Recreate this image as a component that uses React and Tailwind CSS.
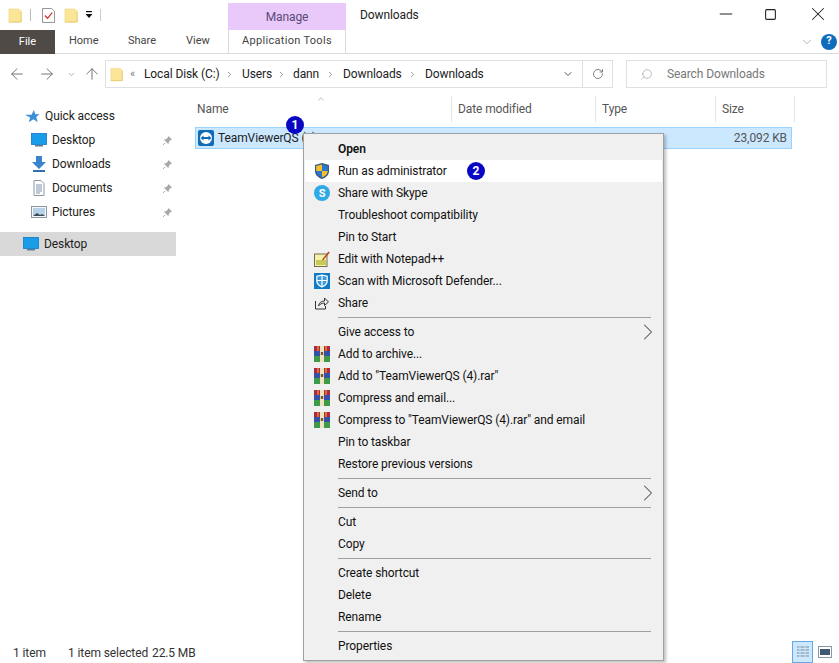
import { ArrowLeft, ArrowRight, ArrowUp, ChevronDown, ChevronRight, ChevronUp, Minus, RotateCw, Search, Square, X } from "lucide-react";

function FolderIcon({ className = "w-[15px] h-[15px]" }) {
  return (
    <svg viewBox="0 0 16 16" className={className}>
      <path d="M1 1h10l3 2v12H1z" fill="#fbe596" stroke="#edd27c" strokeWidth="0.6" />
      <path d="M1 15h13V4" fill="none" stroke="#e6c565" strokeWidth="0.8" />
    </svg>
  );
}

function DesktopIcon() {
  return (
    <svg viewBox="0 0 16 14" className="w-4 h-[14px] shrink-0">
      <rect x="0.5" y="0.5" width="15" height="11" fill="#1a9de8" stroke="#0f78c4" strokeWidth="0.8" />
      <rect x="4" y="12" width="8" height="1.5" fill="#5a7f9c" />
    </svg>
  );
}

function DownloadsIcon() {
  return (
    <svg viewBox="0 0 16 16" className="w-4 h-4 shrink-0">
      <path d="M5 0h6v6h4l-7 7-7-7h4z" fill="#3a84cf" />
      <rect x="2" y="14" width="12" height="2" fill="#2f6fb0" />
    </svg>
  );
}

function DocumentsIcon() {
  return (
    <svg viewBox="0 0 16 16" className="w-4 h-4 shrink-0">
      <path d="M3 .5h7l3 3v12H3z" fill="#fff" stroke="#8b97a3" />
      <path d="M5 5h6M5 7h6M5 9h6M5 11h6M5 13h4" stroke="#6d8ba5" strokeWidth="0.9" />
    </svg>
  );
}

function PicturesIcon() {
  return (
    <svg viewBox="0 0 16 14" className="w-4 h-[14px] shrink-0">
      <rect x="0.5" y="1.5" width="15" height="11" fill="#f5f8fb" stroke="#8b97a3" />
      <rect x="2" y="3" width="12" height="8" fill="#b7d2e8" />
      <path d="M2 11l4-3 3 2 2-1 3 2z" fill="#3d4a52" />
    </svg>
  );
}

function PinIcon() {
  return (
    <svg viewBox="0 0 12 12" className="w-[11px] h-[11px] shrink-0">
      <path d="M7 1l4 4-1.500 .5-2 2-.5 2.500-5-5 2.500-.5 2-2z" fill="#a8a8a8" />
      <path d="M3.500 8.500L1 11" stroke="#a8a8a8" strokeWidth="1" />
    </svg>
  );
}

function StarIcon() {
  return (
    <svg viewBox="0 0 16 16" className="w-[15px] h-[15px] shrink-0">
      <path d="M9.500 1l1.500 4.500h4.500L12 8.500 13.500 14 9 11 4 14l1.500-5L0 6h7z" fill="#3a8fd6" />
    </svg>
  );
}

function TeamViewerIcon() {
  return (
    <svg viewBox="0 0 16 16" className="w-4 h-4 shrink-0">
      <rect width="16" height="16" rx="2" fill="#0e6cb8" />
      <circle cx="8" cy="8" r="6" fill="#fff" />
      <path d="M2.500 8l3-2.500V7h5V5.500l3 2.500-3 2.500V9h-5v1.500z" fill="#0e6cb8" />
    </svg>
  );
}

function ShieldIcon() {
  return (
    <svg viewBox="0 0 16 16" className="w-4 h-4">
      <path d="M8 0L15 2v6c0 4-3 6.500-7 8-4-1.500-7-4-7-8V2z" fill="#3b5a86" />
      <path d="M8 1.500V8H2.200V3z" fill="#f4c02e" />
      <path d="M8 1.500L13.800 3v5H8z" fill="#2b77c8" />
      <path d="M2.200 8H8v6.500C4.800 13.200 2.400 11 2.200 8z" fill="#2b77c8" />
      <path d="M13.800 8H8v6.500c3.200-1.300 5.600-3.500 5.800-6.500z" fill="#f4c02e" />
    </svg>
  );
}

function SkypeIcon() {
  return (
    <div className="w-4 h-4 rounded-full bg-[#2fa9e6] flex items-center justify-center text-white text-[11px] font-bold leading-none">S</div>
  );
}

function NotepadIcon() {
  return (
    <svg viewBox="0 0 16 16" className="w-4 h-4">
      <rect x="0.5" y="3" width="12.500" height="12.500" fill="#f6f1a8" stroke="#6f6f55" />
      <rect x="2" y="9" width="10" height="5" fill="#c9c95a" />
      <path d="M8 8.500l6.500-8 1.200 1.200L9 9.500z" fill="#c0441f" />
    </svg>
  );
}

function DefenderIcon() {
  return (
    <svg viewBox="0 0 16 16" className="w-4 h-4">
      <rect width="16" height="16" fill="#0f7bc4" />
      <path d="M8 2l5.200 1.300V8c0 3-2.400 4.800-5.200 6-2.800-1.200-5.200-3-5.200-6V3.300z" fill="#3d9bdc" stroke="#fff" strokeWidth="1.200" />
      <path d="M8 2v12M3 7.500h10" stroke="#fff" strokeWidth="1.200" />
    </svg>
  );
}

function ShareIcon() {
  return (
    <svg viewBox="0 0 16 16" className="w-4 h-4" fill="none" stroke="#333" strokeWidth="1">
      <path d="M1.500 6v8h10v-3" />
      <path d="M4.500 11c.5-3.500 3-5 6-5V3l4 4-4 3.500V8c-2.500 0-4.500 1-6 3z" />
    </svg>
  );
}

function RarIcon() {
  return (
    <svg viewBox="0 0 16 16" className="w-4 h-4">
      <rect y="0" width="16" height="5" fill="#a82c48" />
      <rect y="5" width="16" height="5" fill="#3550a8" />
      <rect y="10" width="16" height="6" fill="#3f9a48" />
      <rect x="3" y="0" width="2" height="5" fill="#d9702c" />
      <rect x="11" y="0" width="2" height="5" fill="#d9702c" />
      <rect x="6" y="0" width="4" height="16" fill="#efe3c4" />
      <rect x="6.800" y="6" width="2.400" height="3" fill="#7a5a2a" />
    </svg>
  );
}

function Divider() {
  return <div className="h-[7px] flex items-center pl-[33px] pr-[11px]"><div className="h-px w-full bg-[#a0a0a0]" /></div>;
}

function MenuItem({ icon, label, bold, arrow, active }) {
  return (
    <div className={`h-[22px] flex items-center text-[12px] text-[#111] ${active ? "bg-white" : ""}`}>
      <div className="w-[33px] pl-[9px] shrink-0">{icon}</div>
      <span className={`flex-1 whitespace-nowrap ${bold ? "font-semibold" : ""}`}>{label}</span>
      {arrow && <ChevronRight className="w-7 h-7 -my-1 text-[#555]" strokeWidth={0.9} />}
    </div>
  );
}

function ContextMenu() {
  return (
    <div className="absolute left-[303px] top-[133px] w-[361px] h-[528px] bg-[#f0f0f0] border border-[#a0a0a0] pt-1 px-px shadow-[2px_2px_3px_rgba(0,0,0,0.25)]">
      <MenuItem label="Open" bold />
      <MenuItem icon={<ShieldIcon />} label="Run as administrator" active />
      <MenuItem icon={<SkypeIcon />} label="Share with Skype" />
      <MenuItem label="Troubleshoot compatibility" />
      <MenuItem label="Pin to Start" />
      <MenuItem icon={<NotepadIcon />} label="Edit with Notepad++" />
      <MenuItem icon={<DefenderIcon />} label="Scan with Microsoft Defender..." />
      <MenuItem icon={<ShareIcon />} label="Share" />
      <Divider />
      <MenuItem label="Give access to" arrow />
      <MenuItem icon={<RarIcon />} label="Add to archive..." />
      <MenuItem icon={<RarIcon />} label={'Add to "TeamViewerQS (4).rar"'} />
      <MenuItem icon={<RarIcon />} label="Compress and email..." />
      <MenuItem icon={<RarIcon />} label={'Compress to "TeamViewerQS (4).rar" and email'} />
      <MenuItem label="Pin to taskbar" />
      <MenuItem label="Restore previous versions" />
      <Divider />
      <MenuItem label="Send to" arrow />
      <Divider />
      <MenuItem label="Cut" />
      <MenuItem label="Copy" />
      <Divider />
      <MenuItem label="Create shortcut" />
      <MenuItem label="Delete" />
      <MenuItem label="Rename" />
      <Divider />
      <MenuItem label="Properties" />
    </div>
  );
}

function Badge({ n, className }) {
  return (
    <div className={`absolute w-[18px] h-[18px] rounded-full bg-[#0808c4] text-white text-[12px] font-bold flex items-center justify-center ${className}`}>
      {n}
    </div>
  );
}

function TitleBar() {
  return (
    <div className="h-[30px] flex">
      <div className="w-[228px] flex items-center pl-2 shrink-0">
        <FolderIcon />
        <div className="w-px h-[12px] bg-[#bbb] ml-[7px]" />
        <svg viewBox="0 0 14 16" className="w-[13px] h-[15px] ml-[11px]">
          <path d="M.5 .5h10l3 3v12H.5z" fill="#fff" stroke="#8a8a8a" />
          <path d="M3 8l3 3 5-6" fill="none" stroke="#d0342c" strokeWidth="1.300" />
        </svg>
        <FolderIcon className="w-[15px] h-[15px] ml-[9px]" />
        <svg viewBox="0 0 8 8" className="w-2 h-2 ml-[6px]">
          <rect x="1" y="0" width="6" height="1.200" fill="#111" />
          <path d="M0.500 3h7L4 7z" fill="#111" />
        </svg>
        <div className="w-px h-[12px] bg-[#ccc] ml-[7px]" />
      </div>
      <div className="w-[118px] mt-[3px] bg-[#e9c9f9] text-[12px] text-[#5a4a78] flex items-center justify-center shrink-0">Manage</div>
      <div className="ml-[14px] text-[12px] text-[#222] flex items-center flex-1">Downloads</div>
      <div className="flex items-center text-[#222] pb-[2px]">
        <Minus className="w-5 h-5 mr-[28px]" strokeWidth={1.2} />
        <Square className="w-[13px] h-[13px] mr-[30px]" strokeWidth={2} />
        <X className="w-[22px] h-[22px] mr-[10px]" strokeWidth={1.1} />
      </div>
    </div>
  );
}

function RibbonTabs() {
  return (
    <div className="h-6 flex border-b border-[#dadbdc] text-[11px] text-[#444] tracking-normal">
      <div className="w-[55px] bg-[#4f4a46] text-white flex items-center justify-center shrink-0 mb-[-1px]">File</div>
      <div className="ml-[14px] w-[59px] flex items-center shrink-0">Home</div>
      <div className="w-[58px] flex items-center shrink-0">Share</div>
      <div className="w-[42px] flex items-center shrink-0">View</div>
      <div className="w-[118px] border-x border-[#dadbdc] flex items-center justify-center shrink-0 tracking-[0.3px]">Application Tools</div>
      <div className="flex-1 flex items-center justify-end">
        <ChevronDown className="w-[14px] h-[14px] text-[#aaa] mr-[7px]" strokeWidth={1.5} />
        <div className="w-[16px] h-[16px] rounded-full bg-[#0f6cbd] text-white text-[11px] font-bold flex items-center justify-center mr-[2px]">?</div>
      </div>
    </div>
  );
}

function Sep({ className }) {
  return <ChevronRight className={`w-[9px] h-[9px] text-[#777] shrink-0 ${className}`} strokeWidth={2} />;
}

function AddressRow() {
  return (
    <div className="h-10 flex items-center">
      <ArrowLeft className="w-[18px] h-[18px] ml-[8px] text-[#666]" strokeWidth={1.2} />
      <ArrowRight className="w-[18px] h-[18px] ml-[12px] text-[#666]" strokeWidth={1.2} />
      <ChevronDown className="w-[9px] h-[9px] ml-[11px] text-[#999]" strokeWidth={2} />
      <ArrowUp className="w-[18px] h-[18px] ml-[7px] text-[#666]" strokeWidth={1.2} />
      <div className="ml-[4px] w-[508px] h-[28px] border border-[#dfe0e1] flex items-center text-[12px] text-[#222] shrink-0">
        <FolderIcon className="w-[14px] h-[15px] ml-[4px]" />
        <span className="ml-[6px] w-[5px] text-[#777] text-[11px]">«</span>
        <span className="ml-[9px] w-[80px] whitespace-nowrap">Local Disk (C:)</span>
        <Sep className="ml-[1px]" />
        <span className="ml-[8px] w-[35px]">Users</span>
        <Sep />
        <span className="ml-[7px] w-[28px]">dann</span>
        <Sep className="ml-[5px]" />
        <span className="ml-[8px] w-[60px]">Downloads</span>
        <Sep className="ml-[5px]" />
        <span className="ml-[8px] w-[60px]">Downloads</span>
        <ChevronDown className="w-[12px] h-[12px] ml-auto mr-[8px] text-[#555]" strokeWidth={2} />
        <div className="w-[30px] h-full border-l border-[#dfe0e1] flex items-center justify-center">
          <RotateCw className="w-[12px] h-[12px] text-[#666]" strokeWidth={1.6} />
        </div>
      </div>
      <div className="ml-[13px] w-[201px] h-[28px] border border-[#dfe0e1] flex items-center text-[12px] text-[#777] shrink-0">
        <Search className="w-[13px] h-[13px] ml-[13px] text-[#aaa] -scale-x-100" strokeWidth={1.4} />
        <span className="ml-[14px]">Search Downloads</span>
      </div>
    </div>
  );
}

function NavItem({ icon, label, pinned, indent = "pl-[31px]", selected }) {
  return (
    <div className={`h-6 flex items-center ${indent} text-[12px] text-[#222] ${selected ? "bg-[#d9d9d9]" : ""}`}>
      {icon}
      <span className="ml-[5px] flex-1">{label}</span>
      {pinned && <div className="mr-[3px]"><PinIcon /></div>}
    </div>
  );
}

function Sidebar() {
  return (
    <div className="w-[176px] shrink-0 pt-[10px]">
      <NavItem icon={<StarIcon />} label="Quick access" indent="pl-[25px]" />
      <NavItem icon={<DesktopIcon />} label="Desktop" pinned />
      <NavItem icon={<DownloadsIcon />} label="Downloads" pinned />
      <NavItem icon={<DocumentsIcon />} label="Documents" pinned />
      <NavItem icon={<PicturesIcon />} label="Pictures" pinned />
      <div className="h-[8px]" />
      <NavItem icon={<DesktopIcon />} label="Desktop" indent="pl-[23px]" selected />
    </div>
  );
}

function FileList() {
  return (
    <div className="flex-1 relative">
      <ChevronUp className="absolute left-[140px] top-0 w-[10px] h-[10px] text-[#999]" strokeWidth={1.5} />
      <div className="ml-[14px] h-[28px] pt-[2px] grid grid-cols-[261px_144px_120px_80px] text-[12px] text-[#555]">
        <div className="flex items-center pl-[7px]">Name</div>
        <div className="flex items-center pl-[6px] border-l border-[#e5e5e5]">Date modified</div>
        <div className="flex items-center pl-[6px] border-l border-[#e5e5e5]">Type</div>
        <div className="flex items-center pl-[6px] border-x border-[#e5e5e5]">Size</div>
      </div>
      <div className="mt-[5px] ml-[19px] w-[597px] h-[22px] bg-[#cce8ff] border border-[#99d1ff] flex items-center text-[12px] text-[#222]">
        <div className="ml-[2px]"><TeamViewerIcon /></div>
        <span className="ml-[4px] flex-1 whitespace-nowrap">TeamViewerQS (4)</span>
        <span className="mr-[4px] text-[#555]">23,092 KB</span>
      </div>
    </div>
  );
}

function StatusBar() {
  return (
    <div className="h-[22px] flex items-center text-[12px] text-[#333]">
      <span className="ml-[13px] w-[55px] pt-px whitespace-nowrap">1 item</span>
      <span className="w-[84px] pt-px whitespace-nowrap">1 item selected</span>
      <span className="pt-px whitespace-nowrap">22.5 MB</span>
      <div className="ml-auto flex items-center">
        <div className="w-[21px] h-[22px] bg-[#cce8ff] border border-[#66a7e8] flex items-center justify-center">
          <svg viewBox="0 0 14 14" className="w-[14px] h-[14px]">
            <path d="M1 2h12M1 5h12M1 8h12M1 11h12" stroke="#7a8794" strokeWidth="1" />
            <path d="M4 1v12M9 1v12" stroke="#cce8ff" strokeWidth="1" />
          </svg>
        </div>
        <svg viewBox="0 0 14 12" className="w-[14px] h-3 ml-[5px] mr-[7px]">
          <rect x="0.500" y="0.500" width="13" height="11" fill="#fff" stroke="#8b97a3" />
          <rect x="2" y="3" width="10" height="6" fill="#3d5a70" />
        </svg>
      </div>
    </div>
  );
}

export default function App() {
  return (
    <div className="relative w-[839px] h-[663px] bg-white overflow-hidden flex flex-col font-['Roboto',sans-serif] tracking-[-0.1px]">
      <TitleBar />
      <RibbonTabs />
      <AddressRow />
      <div className="flex-1 flex min-h-0">
        <Sidebar />
        <FileList />
      </div>
      <StatusBar />
      <ContextMenu />
      <Badge n="1" className="left-[286px] top-[116px]" />
      <Badge n="2" className="left-[467px] top-[162px]" />
    </div>
  );
}
